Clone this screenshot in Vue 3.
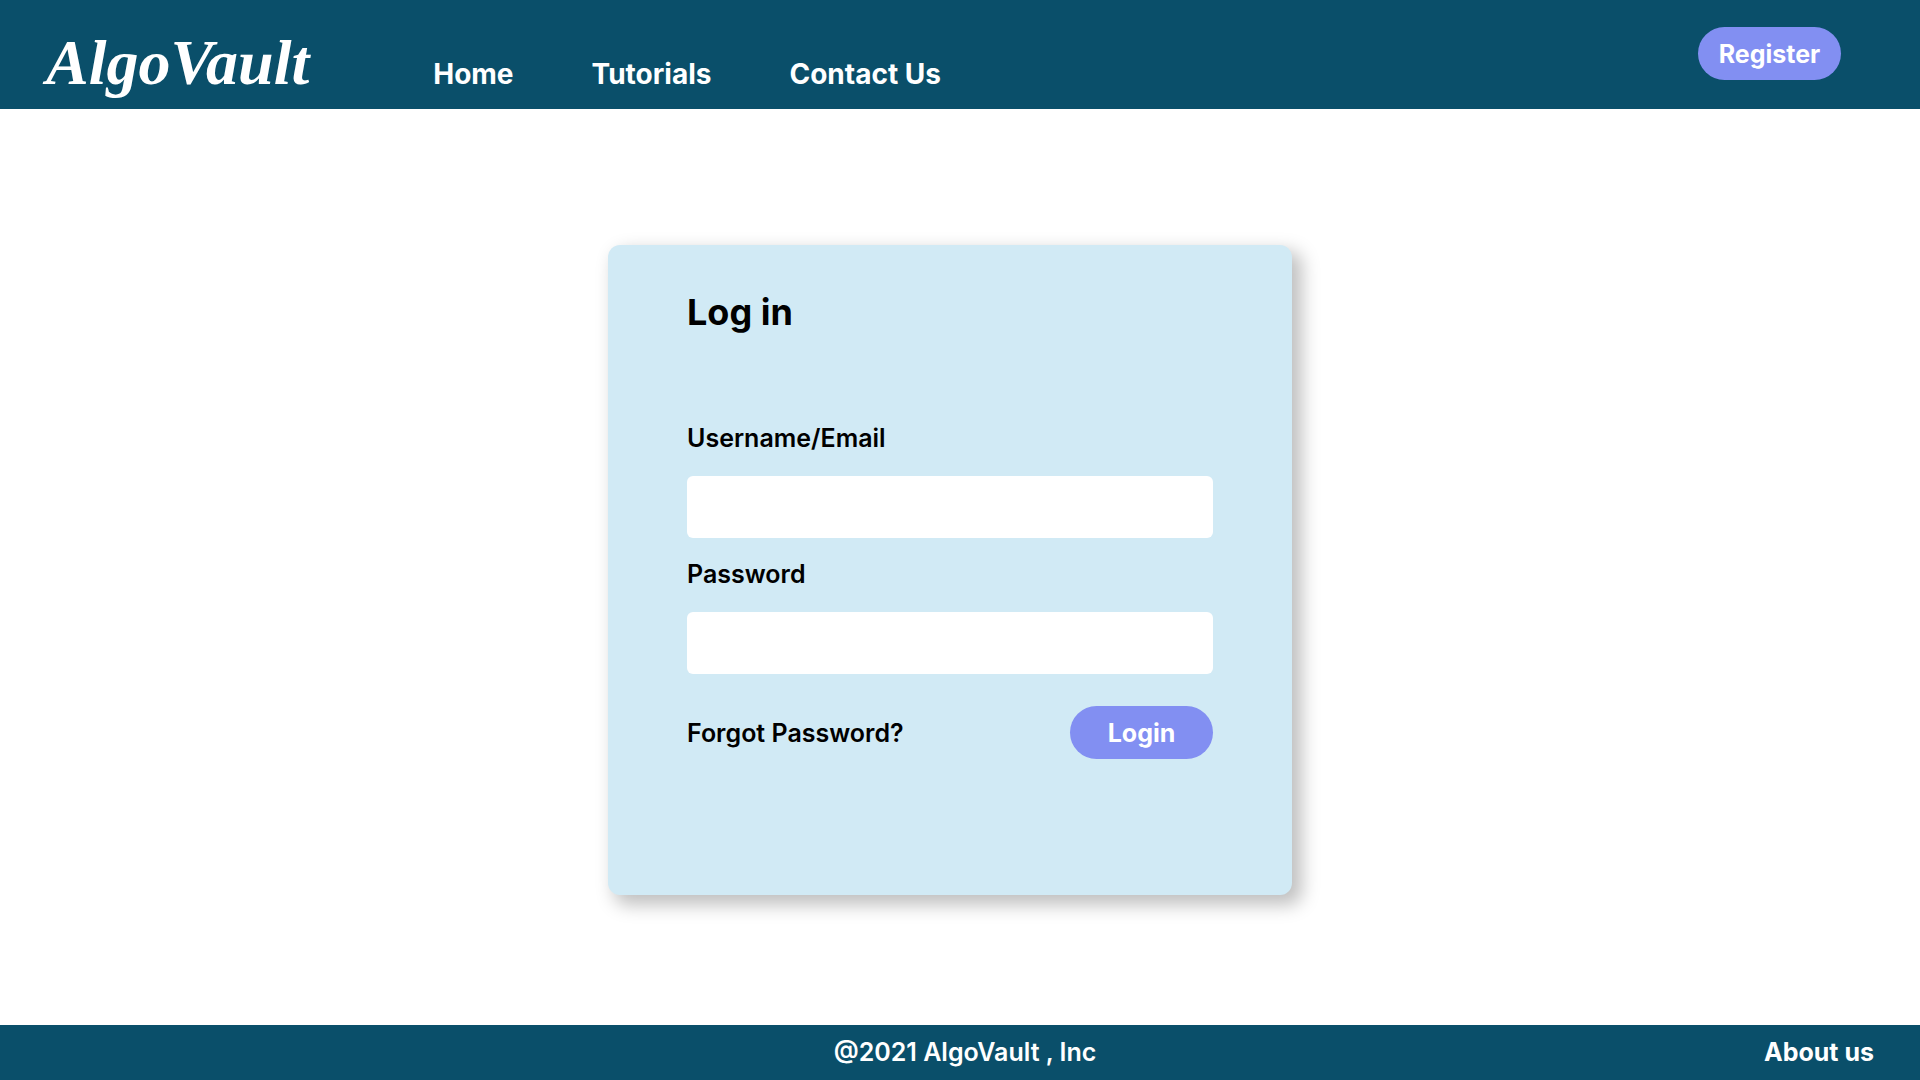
<script setup>
import { reactive } from 'vue'

const links = ['Home', 'Tutorials', 'Contact Us']
const form = reactive({ username: '', password: '' })
</script>

<template>
  <div class="page">
    <header class="header">
      <div class="brand-row">
        <a href="#" class="logo">AlgoVault</a>
        <nav class="nav">
          <a v-for="link in links" :key="link" href="#">{{ link }}</a>
        </nav>
      </div>
      <button type="button" class="pill">Register</button>
    </header>

    <main class="main">
      <form class="card" @submit.prevent>
        <h1>Log in</h1>
        <div class="field">
          <label for="username">Username/Email</label>
          <input id="username" v-model="form.username" type="text" autocomplete="username" />
        </div>
        <div class="field">
          <label for="password">Password</label>
          <input id="password" v-model="form.password" type="password" autocomplete="current-password" />
        </div>
        <div class="actions">
          <a href="#">Forgot Password?</a>
          <button type="submit" class="pill">Login</button>
        </div>
      </form>
    </main>

    <footer class="footer">
      <p>@2021 AlgoVault , Inc</p>
      <a href="#">About us</a>
    </footer>
  </div>
</template>

<style>
body {
  margin: 0;
}
</style>

<style scoped>
.page {
  display: flex;
  flex-direction: column;
  min-height: 100vh;
  background: #fff;
  color: #000;
  font-family: Inter, "Noto Sans", sans-serif;
  font-size: 25px;
  font-weight: 600;
  line-height: 36px;
}

a {
  color: inherit;
  text-decoration: none;
}

.header {
  display: flex;
  align-items: flex-start;
  justify-content: space-between;
  padding: 27px 79px 14px 46px;
  background: #0a4f6a;
  color: #fff;
}

.brand-row {
  display: flex;
  align-items: baseline;
  flex-wrap: wrap;
  gap: 0 124px;
  padding-top: 4px;
}

.logo {
  font-family: "Liberation Serif", serif;
  font-size: 64px;
  font-style: italic;
  font-weight: 700;
  line-height: 64px;
}

.nav {
  display: flex;
  flex-wrap: wrap;
  gap: 0 78px;
  font-size: 28px;
  font-weight: 700;
}

.pill {
  width: 143px;
  height: 53px;
  padding: 0;
  border: 0;
  border-radius: 27px;
  background: #828ff2;
  color: #fff;
  font: inherit;
  font-weight: 700;
  cursor: pointer;
}

.main {
  display: flex;
  flex: 1;
  align-items: flex-start;
  justify-content: center;
  padding: 136px 20px 130px 0;
}

.card {
  box-sizing: border-box;
  width: 100%;
  max-width: 684px;
  padding: 40px 79px 136px;
  border-radius: 12px;
  background: #d1eaf5;
  box-shadow: 8px 8px 18px 2px rgba(0, 0, 0, 0.25);
}

h1 {
  margin: 0 0 81px;
  font-size: 36px;
  font-weight: 700;
  line-height: 54px;
}

.field {
  display: flex;
  flex-direction: column;
  gap: 20px;
  margin-bottom: 18px;
}

.field input {
  box-sizing: border-box;
  width: 100%;
  height: 62px;
  padding: 0 16px;
  border: 0;
  border-radius: 6px;
  background: #fff;
  font: inherit;
}

.actions {
  display: flex;
  align-items: center;
  justify-content: space-between;
  padding-top: 14px;
}

.footer {
  display: grid;
  grid-template-columns: 1fr auto 1fr;
  align-items: center;
  box-sizing: border-box;
  min-height: 55px;
  padding: 0 46px 2px 56px;
  background: #0a4f6a;
  color: #fff;
}

.footer p {
  grid-column: 2;
  margin: 0;
}

.footer a {
  justify-self: end;
  font-weight: 700;
}
</style>
